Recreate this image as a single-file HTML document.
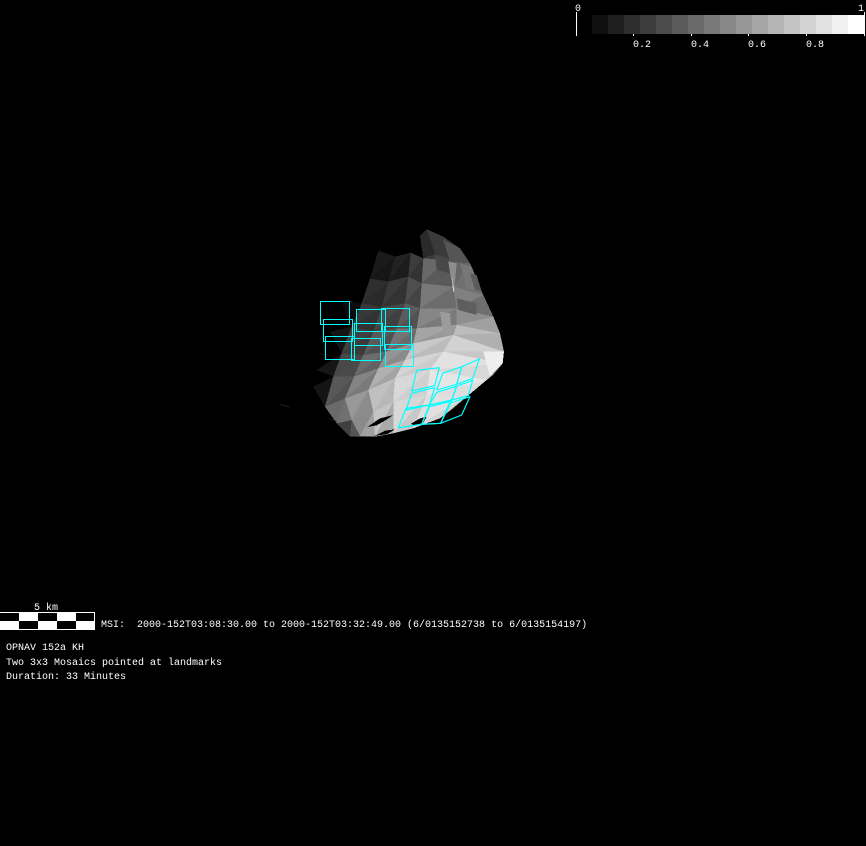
<!DOCTYPE html>
<html>
<head>
<meta charset="utf-8">
<title>MSI OPNAV 152a KH</title>
<style>
html,body{margin:0;padding:0;background:#000;width:866px;height:846px;overflow:hidden}
svg{display:block}
text{font-family:"Liberation Mono",monospace;font-size:10px;fill:#fff}
</style>
</head>
<body>
<svg width="866" height="846" viewBox="0 0 866 846" xmlns="http://www.w3.org/2000/svg">
<rect width="866" height="846" fill="#000"/>

<!-- asteroid, coordinates in 3x space -->
<g transform="translate(280,220) scale(0.33333)" shape-rendering="crispEdges">
<!-- left dark sawtooth -->
<path d="M150 335L215 320L185 400Z" fill="#141414"/>
<path d="M110 450L185 400L160 470Z" fill="#161616"/>
<path d="M100 500L160 470L135 560Z" fill="#141414"/>
<path d="M180 240L245 250L215 320Z" fill="#0c0c0c"/>
<!-- silhouette underlay -->
<path d="M295 92L345 110L392 98L430 115L440 28L490 50L540 85L570 130L590 190L610 225L640 290L660 340L672 395L668 430L640 465L600 495L560 530L520 565L480 595L400 625L340 640L280 650L210 650L170 610L135 560L160 470L185 400L215 320L245 250L270 175Z" fill="#777"/>
<!-- column 0 -->
<path d="M295 92L345 110L270 175Z" fill="#1a1a1a"/><path d="M345 110L325 185L270 175Z" fill="#161616"/>
<path d="M270 175L325 185L245 250Z" fill="#2e2e2e"/><path d="M325 185L305 262L245 250Z" fill="#2a2a2a"/>
<path d="M245 250L305 262L215 320Z" fill="#383838"/><path d="M305 262L280 335L215 320Z" fill="#323232"/>
<path d="M215 320L280 335L185 400Z" fill="#404040"/><path d="M280 335L250 405L185 400Z" fill="#3a3a3a"/>
<path d="M185 400L250 405L160 470Z" fill="#484848"/><path d="M250 405L222 470L160 470Z" fill="#4a4a4a"/>
<path d="M160 470L222 470L135 560Z" fill="#585858"/><path d="M222 470L195 535L135 560Z" fill="#505050"/>
<path d="M135 560L195 535L170 610Z" fill="#6a6a6a"/><path d="M195 535L215 600L170 610Z" fill="#707070"/>
<path d="M170 610L215 600L210 650Z" fill="#404040"/><path d="M215 600L240 648L210 650Z" fill="#555555"/>
<!-- column 1 -->
<path d="M345 110L392 98L325 185Z" fill="#222222"/><path d="M392 98L385 170L325 185Z" fill="#1c1c1c"/>
<path d="M325 185L385 170L305 262Z" fill="#3a3a3a"/><path d="M385 170L375 250L305 262Z" fill="#333333"/>
<path d="M305 262L375 250L280 335Z" fill="#484848"/><path d="M375 250L350 325L280 335Z" fill="#404040"/>
<path d="M280 335L350 325L250 405Z" fill="#5a5a5a"/><path d="M350 325L320 395L250 405Z" fill="#505050"/>
<path d="M250 405L320 395L222 470Z" fill="#6c6c6c"/><path d="M320 395L295 445L222 470Z" fill="#626262"/>
<path d="M222 470L295 445L195 535Z" fill="#848484"/><path d="M295 445L265 510L195 535Z" fill="#7a7a7a"/>
<path d="M195 535L265 510L215 600Z" fill="#989898"/><path d="M265 510L280 575L215 600Z" fill="#8c8c8c"/>
<path d="M215 600L280 575L240 648Z" fill="#8a8a8a"/><path d="M280 575L285 650L240 648Z" fill="#a0a0a0"/>
<!-- column 2 -->
<path d="M392 98L430 115L385 170Z" fill="#3c3c3c"/><path d="M430 115L425 190L385 170Z" fill="#333333"/>
<path d="M385 170L425 190L375 250Z" fill="#4e4e4e"/><path d="M425 190L420 265L375 250Z" fill="#444444"/>
<path d="M375 250L420 265L350 325Z" fill="#5c5c5c"/><path d="M420 265L410 325L350 325Z" fill="#525252"/>
<path d="M350 325L410 325L320 395Z" fill="#747474"/><path d="M410 325L400 370L320 395Z" fill="#6a6a6a"/>
<path d="M320 395L400 370L295 445Z" fill="#949494"/><path d="M400 370L375 420L295 445Z" fill="#8a8a8a"/>
<path d="M295 445L375 420L265 510Z" fill="#b0b0b0"/><path d="M375 420L345 475L265 510Z" fill="#a4a4a4"/>
<path d="M265 510L345 475L280 575Z" fill="#c0c0c0"/><path d="M345 475L340 545L280 575Z" fill="#b8b8b8"/>
<path d="M280 575L340 545L285 650Z" fill="#c4c4c4"/><path d="M340 545L340 640L285 650Z" fill="#aaaaaa"/>
<!-- column 3 -->
<path d="M430 115L500 120L425 190Z" fill="#686868"/><path d="M500 120L520 200L425 190Z" fill="#5a5a5a"/>
<path d="M425 190L520 200L420 265Z" fill="#787878"/><path d="M520 200L530 265L420 265Z" fill="#6c6c6c"/>
<path d="M420 265L530 265L410 325Z" fill="#868686"/><path d="M530 265L530 315L410 325Z" fill="#7a7a7a"/>
<path d="M410 325L530 315L400 370Z" fill="#a4a4a4"/><path d="M530 315L520 345L400 370Z" fill="#989898"/>
<path d="M400 370L520 345L375 420Z" fill="#c8c8c8"/><path d="M520 345L490 395L375 420Z" fill="#bcbcbc"/>
<path d="M375 420L490 395L345 475Z" fill="#d4d4d4"/><path d="M490 395L450 450L345 475Z" fill="#cccccc"/>
<path d="M345 475L450 450L340 545Z" fill="#d8d8d8"/><path d="M450 450L440 525L340 545Z" fill="#d0d0d0"/>
<path d="M340 545L440 525L340 640Z" fill="#d8d8d8"/><path d="M440 525L400 625L340 640Z" fill="#c8c8c8"/>
<!-- column 4 -->
<path d="M500 120L570 130L520 200Z" fill="#666666"/><path d="M570 130L610 225L520 200Z" fill="#707070"/>
<path d="M520 200L610 225L530 265Z" fill="#808080"/><path d="M610 225L640 290L530 265Z" fill="#6e6e6e"/>
<path d="M530 265L640 290L530 315Z" fill="#8e8e8e"/><path d="M640 290L660 340L530 315Z" fill="#a0a0a0"/>
<path d="M530 315L660 340L520 345Z" fill="#bcbcbc"/><path d="M660 340L672 395L520 345Z" fill="#b0b0b0"/>
<path d="M520 345L672 395L490 395Z" fill="#d2d2d2"/><path d="M672 395L668 430L490 395Z" fill="#c8c8c8"/>
<path d="M490 395L668 430L450 450Z" fill="#e2e2e2"/><path d="M668 430L620 480L450 450Z" fill="#d8d8d8"/>
<path d="M450 450L620 480L440 525Z" fill="#e6e6e6"/><path d="M620 480L560 530L440 525Z" fill="#dddddd"/>
<path d="M440 525L560 530L400 625Z" fill="#e0e0e0"/><path d="M560 530L480 595L400 625Z" fill="#d4d4d4"/>
<path d="M610 395L672 395L668 430L630 470Z" fill="#eeeeee"/>
<!-- top cap -->
<path d="M440 28L490 50L540 85L570 130L500 120L430 115Z" fill="#3c3c3c"/>
<path d="M420 48L440 28L470 100L430 115Z" fill="#2a2a2a"/>
<path d="M440 28L490 55L505 110L465 100Z" fill="#3a3a3a"/>
<path d="M490 60L540 85L570 130L510 125Z" fill="#555555"/>
<path d="M465 105L505 115L510 160L470 150Z" fill="#484848"/>
<path d="M505 125L530 130L522 215L512 170Z" fill="#8c8c8c"/>
<path d="M516 170L523 215L519 215Z" fill="#e0e0e0"/>
<path d="M540 130L575 140L605 215L560 205Z" fill="#777777"/>
<path d="M570 160L590 165L605 215L585 210Z" fill="#5c5c5c"/>
<path d="M530 235L590 250L590 285L535 270Z" fill="#5e5e5e"/>
<path d="M480 275L510 280L515 345L490 345Z" fill="#9c9c9c"/>
<!-- bottom slits -->
<path d="M262 621L300 595L340 585L318 600L290 616Z" fill="#000"/>
<path d="M392 612L420 595L440 590L430 608L405 616Z" fill="#000"/>
<path d="M283 648L315 632L345 628L322 642Z" fill="#000"/>
<path d="M130 590L165 600L170 606Z" fill="#1a1a1a"/>
<path d="M0 552L30 560L30 562L2 555Z" fill="#2a2a2a"/>
</g>

<!-- cyan mosaic frames -->
<g fill="none" stroke="#00ffff" stroke-width="1" shape-rendering="crispEdges">
<rect x="320.5" y="301.5" width="29" height="23"/>
<rect x="323.5" y="319.5" width="29" height="22"/>
<rect x="325.5" y="336.5" width="29" height="23"/>
<rect x="356.5" y="309.5" width="29" height="22"/>
<rect x="354.5" y="323.5" width="28" height="22"/>
<rect x="351.5" y="338.5" width="29" height="22"/>
<rect x="381.5" y="308.5" width="28" height="23"/>
<rect x="384.5" y="326.5" width="27" height="23"/>
<rect x="385.5" y="344.5" width="28" height="22"/>
</g>
<g transform="translate(390,355) scale(0.33333)" fill="none" stroke="#00ffff" stroke-width="3.5" stroke-linejoin="round">
<path d="M80 46L148 38L134 92L65 108Z"/>
<path d="M158 55L215 35L200 88L140 105Z"/>
<path d="M215 35L268 12L248 70L200 88Z"/>
<path d="M65 115L134 98L118 150L48 165Z"/>
<path d="M140 112L200 94L185 135L118 150Z"/>
<path d="M200 94L248 76L235 122L185 135Z"/>
<path d="M25 218L48 160L118 150L95 208Z"/>
<path d="M95 208L118 155L185 138L152 205Z"/>
<path d="M152 205L178 145L240 125L215 180Z"/>
<path d="M25 218L95 208L152 205"/>
</g>

<!-- colour bar -->
<g shape-rendering="crispEdges">
<rect x="592" y="15" width="16" height="19" fill="#0f0f0f"/>
<rect x="608" y="15" width="16" height="19" fill="#1e1e1e"/>
<rect x="624" y="15" width="16" height="19" fill="#2d2d2d"/>
<rect x="640" y="15" width="16" height="19" fill="#3c3c3c"/>
<rect x="656" y="15" width="16" height="19" fill="#4b4b4b"/>
<rect x="672" y="15" width="16" height="19" fill="#5a5a5a"/>
<rect x="688" y="15" width="16" height="19" fill="#696969"/>
<rect x="704" y="15" width="16" height="19" fill="#787878"/>
<rect x="720" y="15" width="16" height="19" fill="#878787"/>
<rect x="736" y="15" width="16" height="19" fill="#969696"/>
<rect x="752" y="15" width="16" height="19" fill="#a5a5a5"/>
<rect x="768" y="15" width="16" height="19" fill="#b4b4b4"/>
<rect x="784" y="15" width="16" height="19" fill="#c3c3c3"/>
<rect x="800" y="15" width="16" height="19" fill="#d2d2d2"/>
<rect x="816" y="15" width="16" height="19" fill="#e1e1e1"/>
<rect x="832" y="15" width="16" height="19" fill="#f0f0f0"/>
<rect x="848" y="15" width="16" height="19" fill="#ffffff"/>
<rect x="576" y="12" width="1" height="24" fill="#fff"/>
<rect x="864" y="12" width="1" height="24" fill="#fff"/>
<rect x="633" y="34" width="1" height="2" fill="#fff"/>
<rect x="691" y="34" width="1" height="2" fill="#fff"/>
<rect x="748" y="34" width="1" height="2" fill="#fff"/>
<rect x="806" y="34" width="1" height="2" fill="#fff"/>
</g>
<text x="575" y="11">0</text>
<text x="858" y="11">1</text>
<text x="633" y="47">0.2</text>
<text x="691" y="47">0.4</text>
<text x="748" y="47">0.6</text>
<text x="806" y="47">0.8</text>

<!-- scale bar -->
<g shape-rendering="crispEdges">
<rect x="0" y="612" width="95" height="18" fill="#fff"/>
<rect x="0" y="613" width="19" height="8" fill="#000"/>
<rect x="38" y="613" width="19" height="8" fill="#000"/>
<rect x="76" y="613" width="18" height="8" fill="#000"/>
<rect x="19" y="621" width="19" height="8" fill="#000"/>
<rect x="57" y="621" width="19" height="8" fill="#000"/>
</g>
<text x="34" y="610">5 km</text>
<text x="101" y="627" xml:space="preserve">MSI:  2000-152T03:08:30.00 to 2000-152T03:32:49.00 (6/0135152738 to 6/0135154197)</text>
<text x="6" y="650">OPNAV 152a KH</text>
<text x="6" y="665">Two 3x3 Mosaics pointed at landmarks</text>
<text x="6" y="679">Duration: 33 Minutes</text>
</svg>
</body>
</html>
